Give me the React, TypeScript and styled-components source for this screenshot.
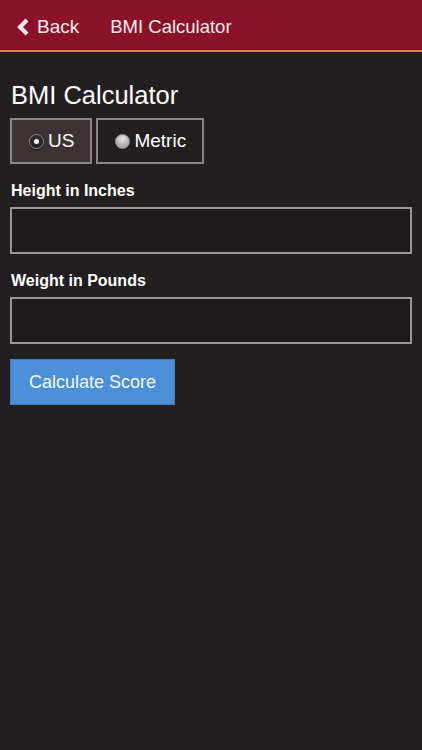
import React, { useState } from 'react';
import styled, { createGlobalStyle } from 'styled-components';

const Global = createGlobalStyle`
  html, body { margin: 0; padding: 0; background: #231f20; }
  body { font-family: "Liberation Sans", Arial, sans-serif; color: #fff; }
  * { box-sizing: border-box; }
`;

const Page = styled.div`
  width: 422px;
  min-height: 750px;
  background: #231f20;
`;

const Header = styled.header`
  height: 52px;
  background: #8b1329;
  border-bottom: 2px solid #d9825a;
  display: flex;
  align-items: center;
  padding: 4px 0 0 17px;
`;

const BackButton = styled.button`
  display: flex;
  align-items: center;
  gap: 7px;
  background: none;
  border: 0;
  padding: 0;
  color: #f4eaec;
  font-family: inherit;
  font-size: 19px;
  cursor: pointer;
`;

const HeaderTitle = styled.h1`
  margin: 0 0 0 31px;
  font-size: 18.5px;
  font-weight: normal;
  color: #f4eaec;
`;

const Content = styled.main`
  padding: 29px 10px 0 10px;
  display: flex;
  flex-direction: column;
`;

const Title = styled.h2`
  margin: 0 0 8px 1px;
  font-size: 25.5px;
  font-weight: normal;
  line-height: 29px;
`;

const UnitGroup = styled.div`
  display: flex;
  gap: 4px;
  margin-bottom: 18px;
`;

const UnitOption = styled.button<{ $active: boolean }>`
  height: 46px;
  padding: 0 16px 0 17px;
  display: flex;
  align-items: center;
  gap: 4px;
  background: ${({ $active }) => ($active ? '#3b3234' : '#231f20')};
  border: 2px solid #8a8587;
  color: #fff;
  font-family: inherit;
  font-size: 19px;
  cursor: pointer;
`;

const Dot = styled.span<{ $active: boolean }>`
  width: 15px;
  height: 15px;
  border-radius: 50%;
  display: inline-flex;
  align-items: center;
  justify-content: center;
  border: 1px solid ${({ $active }) => ($active ? '#8c8c8c' : '#9a9a9a')};
  background: ${({ $active }) =>
    $active
      ? 'radial-gradient(circle at 50% 40%, #2a2a2a 40%, #111 100%)'
      : 'radial-gradient(circle at 50% 30%, #e6e6e6, #8f8f8f)'};
  box-shadow: 0 1px 1px rgba(0,0,0,0.6);
  &::after {
    content: '';
    display: ${({ $active }) => ($active ? 'block' : 'none')};
    width: 5px;
    height: 5px;
    border-radius: 50%;
    background: #fff;
  }
`;

const Label = styled.label`
  display: block;
  font-size: 16px;
  font-weight: bold;
  margin: 0 0 7px 1px;
  line-height: 18px;
`;

const Field = styled.input`
  display: block;
  width: 402px;
  height: 47px;
  background: #1e1a1b;
  border: 2px solid #9a9697;
  color: #fff;
  font-family: inherit;
  font-size: 17px;
  padding: 0 8px;
  margin-bottom: 18px;
  outline: none;
`;

const Submit = styled.button`
  align-self: flex-start;
  width: 165px;
  height: 46px;
  margin-top: -3px;
  background: #4a90d6;
  border: 1px solid #3d7dbd;
  color: #f2f6fb;
  font-family: inherit;
  font-size: 18px;
  cursor: pointer;
`;

export default function App() {
  const [unit, setUnit] = useState<'us' | 'metric'>('us');
  return (
    <Page>
      <Global />
      <Header>
        <BackButton>
          <svg width="13" height="18" viewBox="0 0 13 18">
            <path d="M10 2 L3 9 L10 16" fill="none" stroke="#f4eaec" strokeWidth="4" strokeLinejoin="miter" />
          </svg>
          Back
        </BackButton>
        <HeaderTitle>BMI Calculator</HeaderTitle>
      </Header>
      <Content>
        <Title>BMI Calculator</Title>
        <UnitGroup>
          <UnitOption $active={unit === 'us'} onClick={() => setUnit('us')}>
            <Dot $active={unit === 'us'} />US
          </UnitOption>
          <UnitOption $active={unit === 'metric'} onClick={() => setUnit('metric')}>
            <Dot $active={unit === 'metric'} />Metric
          </UnitOption>
        </UnitGroup>
        <Label>Height in Inches</Label>
        <Field type="text" />
        <Label>Weight in Pounds</Label>
        <Field type="text" />
        <Submit>Calculate Score</Submit>
      </Content>
    </Page>
  );
}
